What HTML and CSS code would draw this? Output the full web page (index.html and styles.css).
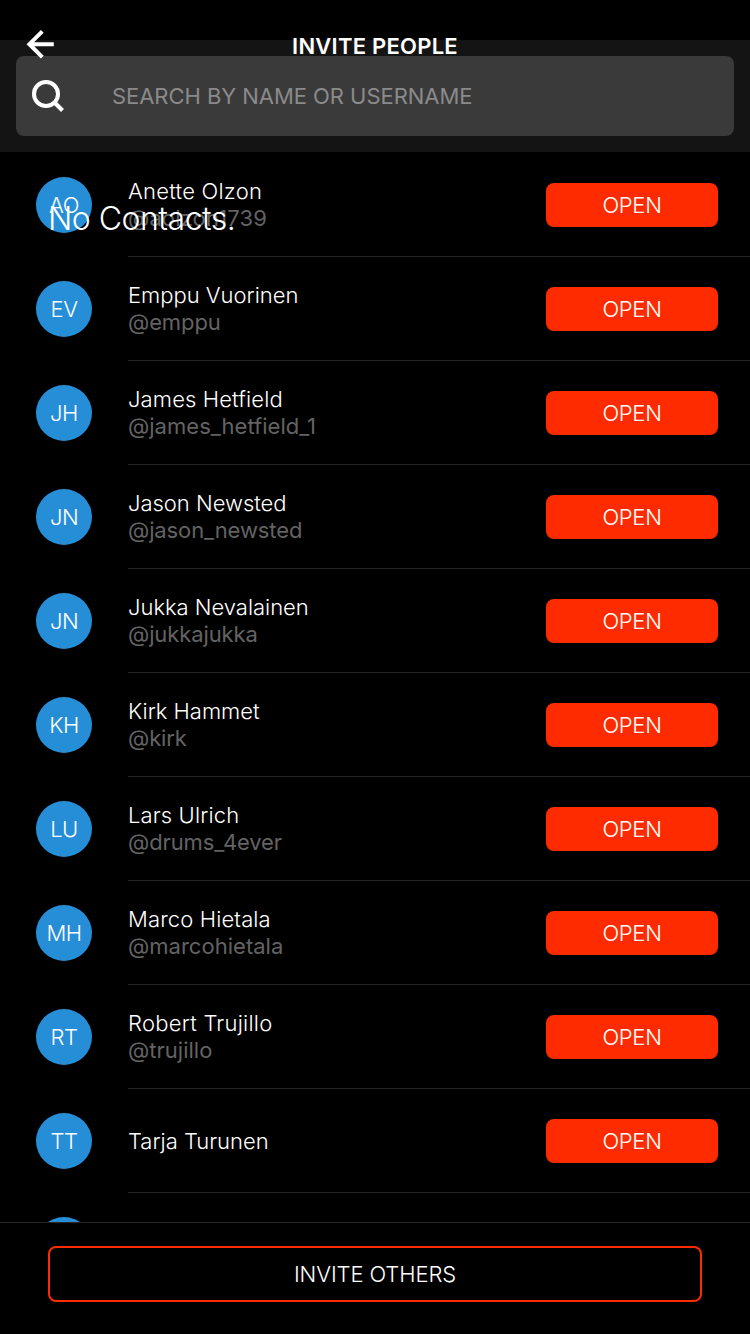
FILE: index.html
```html
<!DOCTYPE html>
<html lang="en">
<head>
<meta charset="utf-8">
<title>Invite People</title>
<link rel="stylesheet" href="styles.css">
</head>
<body>
<div class="screen">
  <header class="navbar">
    <svg class="back" width="30" height="32" viewBox="0 0 30 32" fill="none" stroke="#fff" stroke-width="4"><path d="M16.300 3.300 3.400 16.200l12.900 12.900M3.400 16.200h24.400"/></svg>
    <h1 class="title">INVITE PEOPLE</h1>
  </header>
  <div class="search-area">
    <div class="search">
      <svg class="search-icon" width="34" height="34" viewBox="0 0 34 34" fill="none" stroke="#fff" stroke-width="4"><circle cx="14" cy="14" r="12"/><path d="m22.500 22.500 8 8"/></svg>
      <span class="placeholder">SEARCH BY NAME OR USERNAME</span>
    </div>
  </div>
  <main class="list">
    <div class="row"><div class="avatar">AO</div><div class="info"><div class="who"><div class="name wide">Anette Olzon</div><div class="handle wide">@aolzon1739</div></div><div class="open">OPEN</div></div></div>
    <div class="row"><div class="avatar">EV</div><div class="info"><div class="who"><div class="name">Emppu Vuorinen</div><div class="handle">@emppu</div></div><div class="open">OPEN</div></div></div>
    <div class="row"><div class="avatar">JH</div><div class="info"><div class="who"><div class="name medium">James Hetfield</div><div class="handle medium">@james_hetfield_1</div></div><div class="open">OPEN</div></div></div>
    <div class="row"><div class="avatar">JN</div><div class="info"><div class="who"><div class="name">Jason Newsted</div><div class="handle">@jason_newsted</div></div><div class="open">OPEN</div></div></div>
    <div class="row"><div class="avatar">JN</div><div class="info"><div class="who"><div class="name">Jukka Nevalainen</div><div class="handle">@jukkajukka</div></div><div class="open">OPEN</div></div></div>
    <div class="row"><div class="avatar">KH</div><div class="info"><div class="who"><div class="name">Kirk Hammet</div><div class="handle">@kirk</div></div><div class="open">OPEN</div></div></div>
    <div class="row"><div class="avatar">LU</div><div class="info"><div class="who"><div class="name medium">Lars Ulrich</div><div class="handle">@drums_4ever</div></div><div class="open">OPEN</div></div></div>
    <div class="row"><div class="avatar">MH</div><div class="info"><div class="who"><div class="name medium">Marco Hietala</div><div class="handle medium">@marcohietala</div></div><div class="open">OPEN</div></div></div>
    <div class="row"><div class="avatar">RT</div><div class="info"><div class="who"><div class="name wide">Robert Trujillo</div><div class="handle medium">@trujillo</div></div><div class="open">OPEN</div></div></div>
    <div class="row"><div class="avatar">TT</div><div class="info"><div class="who"><div class="name">Tarja Turunen</div></div><div class="open">OPEN</div></div></div>
    <div class="row"><div class="avatar"></div></div>
    <p class="empty">No Contacts.</p>
  </main>
  <footer class="footer"><div class="invite">INVITE OTHERS</div></footer>
</div>
</body>
</html>
```
FILE: styles.css
```css
* { box-sizing: border-box; margin: 0; }
body { background: #000; }
.screen {
  position: relative;
  display: flex;
  flex-direction: column;
  width: 750px;
  height: 1334px;
  padding-top: 40px;
  overflow: hidden;
  background: #000;
  color: #fff;
  font: 300 22px/27px Inter, "Liberation Sans", sans-serif;
}
/* Floats over the top edge of the search area */
.navbar {
  position: absolute;
  top: 0;
  left: 0;
  width: 100%;
  height: 88px;
}
.back { position: absolute; left: 26px; top: 28px; }
.title {
  padding-top: 33px;
  text-align: center;
  font-size: 22px;
  line-height: 27px;
  font-weight: 600;
  letter-spacing: 0.25px;
}
.search-area { flex: none; height: 112px; padding: 16px; background: #141414; }
.search {
  display: flex;
  align-items: center;
  height: 80px;
  padding-left: 16px;
  gap: 46px;
  border-radius: 8px;
  background: #3a3a3a;
}
.search-icon { margin-top: 2px; }
.placeholder { color: #8a8a8a; font-weight: 400; letter-spacing: -0.05px; }
.list { position: relative; flex: 1; min-height: 0; overflow: hidden; padding-top: 1px; }
.empty {
  position: absolute;
  left: 48px;
  top: 47px;
  font-size: 32px;
  line-height: 40px;
  letter-spacing: -0.5px;
}
.row { display: flex; gap: 36px; height: 104px; padding-left: 36px; }
.avatar {
  flex: none;
  width: 56px;
  height: 56px;
  margin-top: 24px;
  border-radius: 50%;
  background: #258ed6;
  text-align: center;
  line-height: 56px;
  letter-spacing: -0.5px;
}
.info {
  flex: 1;
  display: flex;
  align-items: center;
  justify-content: space-between;
  padding: 1px 32px 0 0;
  border-bottom: 1px solid #262626;
}
.name { letter-spacing: -0.02px; }
.name.medium { letter-spacing: 0.13px; }
.name.wide { letter-spacing: 0.24px; }
.handle { color: #636363; font-weight: 400; letter-spacing: -0.11px; }
.handle.medium { letter-spacing: 0.02px; }
.handle.wide { letter-spacing: 0.13px; }
.open {
  width: 172px;
  height: 44px;
  border-radius: 8px;
  background: #ff2b00;
  text-align: center;
  line-height: 44px;
  letter-spacing: -0.3px;
}
.footer { flex: none; height: 112px; padding: 23px 48px 0; border-top: 1px solid #262626; }
.invite {
  height: 56px;
  border: 2px solid #ff2b00;
  border-radius: 8px;
  text-align: center;
  line-height: 52px;
  letter-spacing: -0.1px;
}
```
